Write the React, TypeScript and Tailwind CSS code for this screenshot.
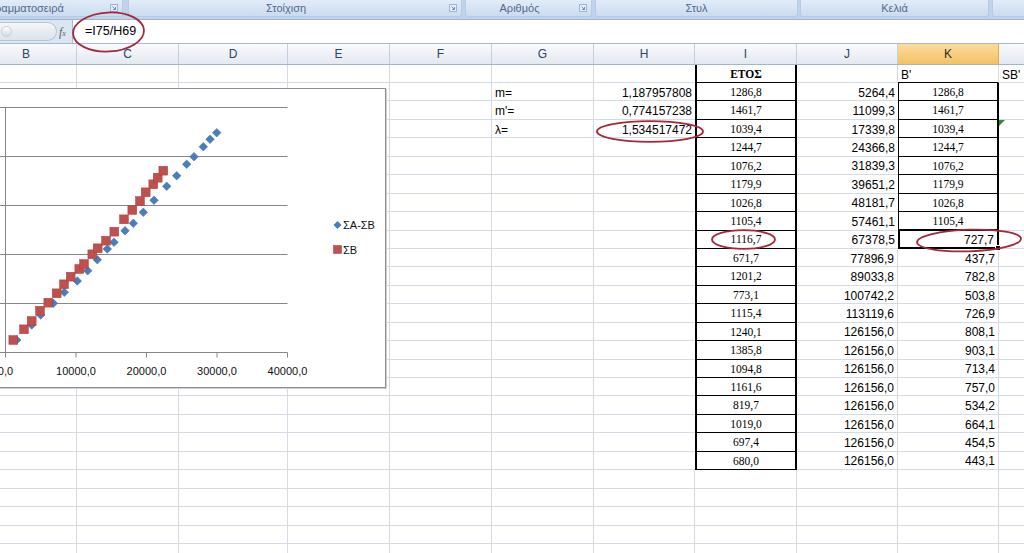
import React from 'react';

type Side = 'grid' | 'none' | 'black1' | 'black2';

interface CellSpec {
  text?: string;
  align?: 'l' | 'r' | 'c';
  serif?: boolean;
  bold?: boolean;
  bl?: Side;
  br?: Side;
  bb?: Side;
  selected?: boolean;
  flag?: boolean;
}

const COLS = [
  { key: 'B', w: 'w-[101px]' },
  { key: 'C', w: 'w-[102px]' },
  { key: 'D', w: 'w-[109px]' },
  { key: 'E', w: 'w-[102px]' },
  { key: 'F', w: 'w-[102px]' },
  { key: 'G', w: 'w-[102px]' },
  { key: 'H', w: 'w-[101px]' },
  { key: 'I', w: 'w-[102px]' },
  { key: 'J', w: 'w-[101px]' },
  { key: 'K', w: 'w-[101px]' },
  { key: 'L', w: 'w-[101px]' },
];

// I, J, K
const DATA: [string, string, string][] = [
  ['1286,8', '5264,4', '1286,8'],
  ['1461,7', '11099,3', '1461,7'],
  ['1039,4', '17339,8', '1039,4'],
  ['1244,7', '24366,8', '1244,7'],
  ['1076,2', '31839,3', '1076,2'],
  ['1179,9', '39651,2', '1179,9'],
  ['1026,8', '48181,7', '1026,8'],
  ['1105,4', '57461,1', '1105,4'],
  ['1116,7', '67378,5', '727,7'],
  ['671,7', '77896,9', '437,7'],
  ['1201,2', '89033,8', '782,8'],
  ['773,1', '100742,2', '503,8'],
  ['1115,4', '113119,6', '726,9'],
  ['1240,1', '126156,0', '808,1'],
  ['1385,8', '126156,0', '903,1'],
  ['1094,8', '126156,0', '713,4'],
  ['1161,6', '126156,0', '757,0'],
  ['819,7', '126156,0', '534,2'],
  ['1019,0', '126156,0', '664,1'],
  ['697,4', '126156,0', '454,5'],
  ['680,0', '126156,0', '443,1'],
];

const PARAMS = [
  ['m=', '1,187957808'],
  ["m'=", '0,774157238'],
  ['λ=', '1,534517472'],
];

const BLUE = [
  [16.7, 340], [31.7, 325], [40.7, 315], [53.3, 303.3], [64.3, 292.3], [77.3, 281], [87.7, 270.7],
  [97.3, 259.7], [107.3, 249], [114, 242.3], [125, 230.7], [133.3, 223.3], [143.3, 212.3], [154, 200.3],
  [166.7, 186.3], [176.7, 175.7], [186.7, 164.3], [194, 156.7], [203.3, 146.7], [210, 139.3], [216.7, 132.7],
];

const RED = [
  [13.3, 340], [24, 329.3], [31.7, 321], [40, 310.7], [48.3, 302.7], [56.7, 293.3], [64, 284.3],
  [70.7, 276.7], [79.3, 269], [84, 264], [92.3, 254.3], [97.7, 248.3], [106, 240.7], [114.3, 231.7],
  [124, 219.3], [132.3, 210], [140, 201], [145.7, 192.3], [153.3, 184.3], [157.7, 177.7], [163.3, 170.7],
];

const BL: Record<Side, string> = {
  grid: '',
  none: '',
  black1: 'border-l border-l-black',
  black2: 'border-l-2 border-l-black',
};
const BR: Record<Side, string> = {
  grid: 'border-r border-r-[#d5dbe4]',
  none: 'border-r-0',
  black1: 'border-r border-r-black',
  black2: 'border-r-2 border-r-black',
};
const BB: Record<Side, string> = {
  grid: 'border-b border-b-[#d5dbe4]',
  none: 'border-b-0',
  black1: 'border-b border-b-black',
  black2: 'border-b-2 border-b-black',
};

function cellSpec(col: string, r: number): CellSpec {
  const d = r >= 1 && r <= 21 ? DATA[r - 1] : null;
  const boxI = r <= 21;
  const boxK = r >= 1 && r <= 8;

  switch (col) {
    case 'G':
      if (r >= 1 && r <= 3) return { text: PARAMS[r - 1][0], align: 'l' };
      return {};
    case 'H':
      if (r >= 1 && r <= 3) return { text: PARAMS[r - 1][1], align: 'r', br: boxI ? 'none' : 'grid' };
      return { br: boxI ? 'none' : 'grid' };
    case 'I':
      if (r === 0) return { text: 'ΕΤΟΣ', align: 'c', serif: true, bold: true, bl: 'black2', br: 'black2', bb: 'black1' };
      if (d) return { text: d[0], align: 'c', serif: true, bl: 'black2', br: 'black2', bb: 'black1' };
      return {};
    case 'J':
      if (d) return { text: d[1], align: 'r', br: boxK || r === 9 ? 'none' : 'grid' };
      return {};
    case 'K':
      if (r === 0) return { text: "B'", align: 'l', bb: 'black1' };
      if (boxK) return { text: d![2], align: 'c', serif: true, bl: 'black1', br: 'black2', bb: r === 8 ? 'black2' : 'black1' };
      if (r === 9) return { text: d![2], align: 'r', bl: 'black2', br: 'black2', bb: 'black2', selected: true };
      if (d) return { text: d[2], align: 'r' };
      return {};
    case 'L':
      if (r === 0) return { text: "SB'", align: 'l' };
      if (r === 3) return { flag: true };
      return {};
    default:
      return {};
  }
}

function Cell({ w, spec }: { w: string; spec: CellSpec }) {
  const align = spec.align === 'r' ? 'justify-end' : spec.align === 'c' ? 'justify-center' : 'justify-start';
  const font = spec.serif
    ? "font-['Liberation_Serif',serif] text-[11.5px]"
    : "font-['Liberation_Sans',sans-serif] text-[12px]";
  return (
    <div
      className={`relative shrink-0 h-full flex items-center pt-[2px] px-[3px] leading-none whitespace-nowrap text-black ${w} ${align} ${font} ${
        spec.bold ? 'font-bold' : ''
      } ${BL[spec.bl ?? 'grid']} ${BR[spec.br ?? 'grid']} ${BB[spec.bb ?? 'grid']}`}
    >
      {spec.text}
      {spec.selected && (
        <span className="absolute right-[-4px] bottom-[-4px] w-[6px] h-[6px] bg-black border border-white z-10" />
      )}
      {spec.flag && (
        <svg className="absolute left-0 top-0" width="6" height="6" viewBox="0 0 6 6">
          <polygon points="0,0 6,0 0,6" fill="#2f8a3a" />
        </svg>
      )}
    </div>
  );
}

function Launcher() {
  return (
    <svg className="absolute right-[4px] top-[4px]" width="8" height="8" viewBox="0 0 8 8">
      <rect x="0.5" y="0.5" width="7" height="7" fill="#e4edf8" stroke="#9fb5d2" />
      <path d="M2.5 2.5l3 3M5.5 3v2.5H3" stroke="#6a86ad" fill="none" strokeWidth="0.9" />
    </svg>
  );
}

function Group({ label, cls, launcher, left }: { label: string; cls: string; launcher?: boolean; left?: boolean }) {
  return (
    <div
      className={`relative shrink-0 h-[17px] flex items-center rounded-b-[3px] border-x border-b border-[#b6cbe4] bg-gradient-to-b from-[#e2ecf8] to-[#cadcf0] text-[11px] text-[#53698a] font-['Liberation_Sans',sans-serif] ${cls} ${
        left ? 'justify-start pl-[2px]' : 'justify-center'
      } ${launcher && !left ? 'pr-[18px]' : ''}`}
    >
      {label}
      {launcher && <Launcher />}
    </div>
  );
}

function Chart() {
  const gridY = [107.5, 156.5, 205.5, 254.5, 303.5];
  const ticksX = [
    [5.5, '0,0'],
    [76, '10000,0'],
    [146.5, '20000,0'],
    [217, '30000,0'],
    [287.5, '40000,0'],
  ] as const;
  return (
    <div className="absolute left-[-10px] top-[88px] z-10 w-[396px] h-[300px] bg-white border border-[#8f8f8f] shadow-[1px_1px_0_#d0d0d0]">
      <svg className="block" width={394} height={298} viewBox="-9 89 394 298">
        {gridY.map((y) => (
          <line key={y} x1={0} x2={287.5} y1={y} y2={y} stroke="#878787" strokeWidth={1} />
        ))}
        <line x1={5.5} x2={5.5} y1={107} y2={352.5} stroke="#878787" />
        <line x1={0} x2={5.5} y1={352.5} y2={352.5} stroke="#878787" />
        <line x1={5} x2={287.5} y1={352.5} y2={352.5} stroke="#878787" />
        {ticksX.map(([x, t]) => (
          <g key={t}>
            <line x1={x} x2={x} y1={352.5} y2={357.5} stroke="#878787" />
            <text
              x={x}
              y={375}
              textAnchor="middle"
              fontSize={11}
              fontFamily="'Liberation Sans', sans-serif"
              fill="#111"
            >
              {t}
            </text>
          </g>
        ))}
        {BLUE.map(([x, y], i) => (
          <polygon
            key={`b${i}`}
            points={`${x},${y - 4.3} ${x + 4.3},${y} ${x},${y + 4.3} ${x - 4.3},${y}`}
            fill="#4a7ebb"
            stroke="#3d6ca5"
            strokeWidth={0.5}
          />
        ))}
        {RED.map(([x, y], i) => (
          <rect
            key={`r${i}`}
            x={x - 4.4}
            y={y - 4.4}
            width={8.8}
            height={8.8}
            fill="#c0504d"
            stroke="#a23f3c"
            strokeWidth={0.5}
          />
        ))}
        <polygon points="337.5,221 341.5,225 337.5,229 333.5,225" fill="#4a7ebb" />
        <text x={343} y={229} fontSize={11} fontFamily="'Liberation Sans', sans-serif" fill="#111">
          ΣΑ-ΣΒ
        </text>
        <rect x={333.5} y={245.5} width={8} height={8} fill="#c0504d" stroke="#a23f3c" strokeWidth={0.5} />
        <text x={343} y={253.5} fontSize={11} fontFamily="'Liberation Sans', sans-serif" fill="#111">
          ΣΒ
        </text>
      </svg>
    </div>
  );
}

export default function App() {
  const rows = Array.from({ length: 27 }, (_, r) => r);
  return (
    <div className="relative w-[1024px] h-[553px] overflow-hidden bg-white font-['Liberation_Sans',sans-serif]">
      {/* ribbon group captions */}
      <div className="flex h-[20px] bg-[#bfd3eb] border-b border-[#9db5d3]">
        <Group label="Γραμματοσειρά" cls="w-[137px] ml-[-14px]" launcher left />
        <div className="relative shrink-0 ml-[5px]" />
        <Group label="Στοίχιση" cls="w-[334px]" launcher />
        <Group label="Αριθμός" cls="w-[127px] ml-[3px]" launcher />
        <Group label="Στυλ" cls="w-[203px] ml-[3px]" />
        <Group label="Κελιά" cls="w-[189px] ml-[2px]" />
        <Group label="" cls="w-[80px] ml-[3px]" />
      </div>

      {/* formula bar */}
      <div className="flex h-[24px] items-center bg-[#dbe6f3] border-b border-[#a6bad3]">
        <div className="relative shrink-0 w-[57px] h-[19px] rounded-r-full border border-l-0 border-[#b9c4d3] bg-gradient-to-b from-[#f4f6f9] to-[#dde3ea]">
          <span className="absolute left-[1px] top-[3px] w-[11px] h-[11px] rounded-full bg-gradient-to-b from-[#ffffff] to-[#d3dae3] border border-[#c3ccd8]" />
        </div>
        <span className="shrink-0 w-[13px] ml-[2px] font-['Liberation_Serif',serif] italic text-[12px] leading-none text-[#5e5e5e]">
          f<span className="text-[8px]">x</span>
        </span>
        <div className="flex-1 h-full flex items-center bg-white border-l border-[#a6bad3] pl-[12px] text-[12.5px] text-black">
          =I75/H69
        </div>
      </div>

      {/* column headers */}
      <div className="flex h-[21px] ml-[-24px] border-b border-[#9eb6ce]">
        {COLS.map((c) => (
          <div
            key={c.key}
            className={`shrink-0 h-full flex items-center justify-center border-r text-[12px] ${c.w} ${
              c.key === 'K'
                ? 'bg-gradient-to-b from-[#fbdc9b] to-[#f3c263] border-r-[#e7a84a] text-[#2b2b2b]'
                : 'bg-gradient-to-b from-[#f9fafc] to-[#e3e9f1] border-r-[#c3cfdd] text-[#2e4463]'
            }`}
          >
            {c.key === 'L' ? '' : c.key}
          </div>
        ))}
      </div>

      {/* sheet rows */}
      {rows.map((r) => (
        <div key={r} className={`flex ml-[-24px] ${r === 0 ? 'h-[18px]' : 'h-[18.45px]'}`}>
          {COLS.map((c) => (
            <Cell key={c.key} w={c.w} spec={cellSpec(c.key, r)} />
          ))}
        </div>
      ))}

      <Chart />

      {/* red hand-drawn marks */}
      <svg className="absolute left-0 top-0 z-20 pointer-events-none" width={1024} height={553}>
        <g fill="none" stroke="#a3283a" strokeWidth={1.8}>
          <ellipse cx={108.5} cy={32} rx={35.5} ry={19.5} transform="rotate(-3 108.5 32)" />
          <ellipse cx={650} cy={131.5} rx={53} ry={10.3} />
          <ellipse cx={743.5} cy={239.5} rx={31.5} ry={9.3} />
          <ellipse cx={969} cy={240.5} rx={52} ry={10.8} transform="rotate(-2 969 240.5)" />
        </g>
      </svg>
    </div>
  );
}
